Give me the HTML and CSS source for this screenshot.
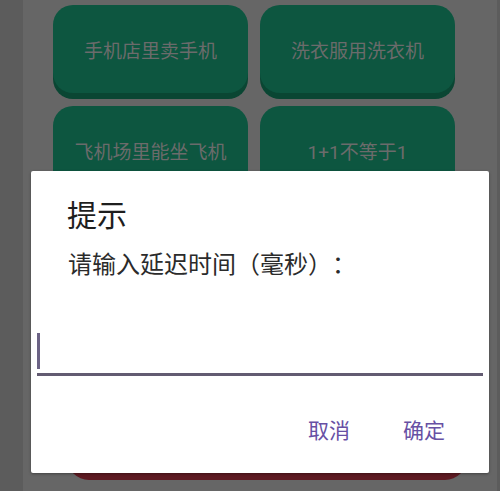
FILE: index.html
```html
<!DOCTYPE html>
<html lang="zh-CN">
<head>
<meta charset="utf-8">
<title>提示</title>
<link rel="stylesheet" href="styles.css">
</head>
<body>
<div class="screen">
  <div class="edge edge-left"></div>
  <main class="content">
    <div class="grid">
      <button class="tile">手机店里卖手机</button>
      <button class="tile">洗衣服用洗衣机</button>
      <button class="tile">飞机场里能坐飞机</button>
      <button class="tile">1+1不等于1</button>
    </div>
    <div class="danger"></div>
  </main>
  <div class="edge edge-right"></div>
</div>

<div class="dialog">
  <h2 class="title">提示</h2>
  <p class="message">请输入延迟时间（毫秒）：</p>
  <div class="field"><span class="caret"></span></div>
  <div class="actions">
    <button class="action">取消</button>
    <button class="action">确定</button>
  </div>
</div>
</body>
</html>
```

FILE: styles.css
```css
html, body {
  margin: 0;
  padding: 0;
  width: 500px;
  height: 491px;
  overflow: hidden;
  font-family: Roboto, "Noto Sans CJK SC", sans-serif;
}

.screen {
  display: flex;
  width: 500px;
  height: 491px;
  background: #666666;
}

.edge {
  background: #5c5c5c;
}
.edge-left { width: 23px; }
.edge-right { width: 3px; }

.content {
  flex: 1;
  display: flex;
  flex-direction: column;
  padding: 5px 42px 11px 30px;
}

.grid {
  display: grid;
  grid-template-columns: 195px 195px;
  column-gap: 12px;
  row-gap: 13px;
}

.tile {
  height: 88px;
  border: none;
  border-radius: 20px;
  background: #0d5640;
  box-shadow: 0 6px 0 #0a4633;
  color: #6b6b6b;
  font-family: Roboto, "Noto Sans CJK SC", sans-serif;
  font-size: 19px;
  padding: 0;
}

.danger {
  margin-top: auto;
  margin-left: 14px;
  margin-right: -12px;
  height: 60px;
  border-radius: 0 0 22px 22px;
  background: #5e1a22;
}

.dialog {
  position: absolute;
  left: 31px;
  top: 171px;
  width: 458px;
  height: 302px;
  box-sizing: border-box;
  background: #ffffff;
  border-radius: 2px;
  box-shadow: 0 1px 3px rgba(0, 0, 0, 0.35);
  padding-top: 27px;
  display: flex;
  flex-direction: column;
}

.title {
  margin: 0 0 0 36px;
  font-size: 30px;
  line-height: 36px;
  font-weight: 400;
  color: #1e1e1e;
}

.message {
  margin: 16px 0 0 37px;
  font-size: 24px;
  line-height: 30px;
  color: #2b2b2b;
  text-spacing-trim: space-all;
}

.field {
  margin: 49px 6px 0 6px;
  padding-top: 4px;
  padding-bottom: 4px;
  border-bottom: 3px solid #625b71;
  display: flex;
}

.caret {
  width: 3px;
  height: 36px;
  background: #6c6385;
}

.actions {
  margin-top: 37px;
  display: flex;
  justify-content: flex-end;
  gap: 21px;
  padding-right: 28px;
}

.action {
  border: none;
  background: transparent;
  padding: 0 16px;
  font-family: Roboto, "Noto Sans CJK SC", sans-serif;
  font-size: 21px;
  line-height: 36px;
  color: #6750a4;
}
```
